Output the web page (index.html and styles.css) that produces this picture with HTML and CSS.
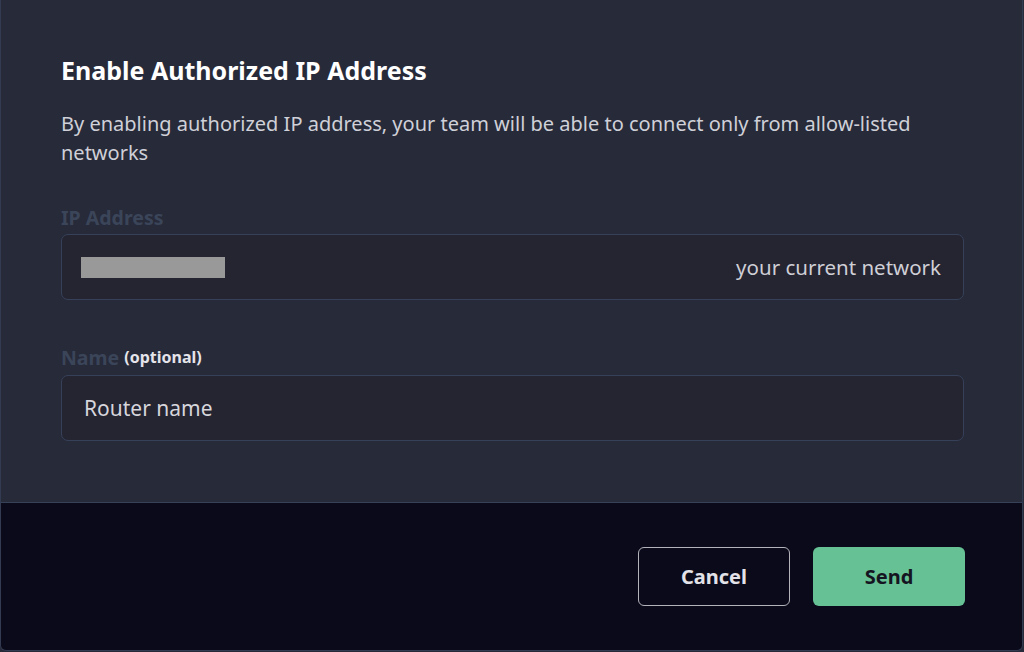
FILE: index.html
```html
<!DOCTYPE html>
<html lang="en">
<head>
<meta charset="utf-8">
<title>Enable Authorized IP Address</title>
<link rel="stylesheet" href="styles.css">
</head>
<body>
<div class="modal">
  <div class="modal-body">
    <h2 class="title">Enable Authorized IP Address</h2>
    <p class="desc">By enabling authorized IP address, your team will be able to connect only from allow-listed networks</p>
    <div class="field field-ip">
      <label class="label">IP Address</label>
      <div class="input">
        <span class="redacted"></span>
        <span class="hint">your current network</span>
      </div>
    </div>
    <div class="field field-name">
      <label class="label">Name <span class="optional">(optional)</span></label>
      <div class="input">
        <span class="placeholder">Router name</span>
      </div>
    </div>
  </div>
  <div class="modal-footer">
    <button class="btn btn-cancel">Cancel</button>
    <button class="btn btn-send">Send</button>
  </div>
</div>
</body>
</html>
```
FILE: styles.css
```css
html, body {
  margin: 0;
  padding: 0;
  background: #272a39;
}
body {
  font-family: "Noto Sans", "Open Sans", sans-serif;
  width: 1024px;
  height: 652px;
  overflow: hidden;
}
.modal {
  width: 1023px;
  height: 651px;
  border-left: 1px solid #323b52;
  border-bottom: 1px solid #323b52;
  border-right: 1px solid #323b52;
  border-bottom-left-radius: 6px;
  border-bottom-right-radius: 6px;
  box-sizing: border-box;
  display: flex;
  flex-direction: column;
  background: #272a39;
  overflow: hidden;
}
.modal-body {
  height: 503px;
  box-sizing: border-box;
  padding: 55px 58px 0 60px;
  border-bottom: 1px solid #36415a;
  display: flex;
  flex-direction: column;
}
.title {
  margin: 0;
  font-size: 25px;
  font-weight: 700;
  color: #ffffff;
  line-height: 30px;
}
.desc {
  margin: 24px 0 0 0;
  font-size: 20px;
  line-height: 29px;
  color: #cfd0d8;
  max-width: 880px;
}
.field {
  display: flex;
  flex-direction: column;
}
.field-ip { margin-top: 39px; }
.field-name { margin-top: 46px; }
.label {
  font-size: 19.5px;
  font-weight: 700;
  color: #3b4559;
  line-height: 24px;
  margin-bottom: 4px;
}
.optional {
  font-size: 16px;
  color: #e4e4ea;
  position: relative;
  top: -2px;
}
.input {
  height: 66px;
  box-sizing: border-box;
  border: 1px solid #364159;
  border-radius: 7px;
  background: #252431;
  display: flex;
  align-items: center;
  justify-content: space-between;
  padding: 0 22px 0 19px;
}
.redacted {
  display: block;
  width: 144px;
  height: 21px;
  background: #999999;
  margin-top: 1px;
}
.hint {
  font-size: 20.5px;
  color: #cfcfd6;
}
.placeholder {
  font-size: 21px;
  color: #d6d6dc;
  padding-left: 3px;
}
.modal-footer {
  flex: 1;
  background: #0b0a1a;
  display: flex;
  justify-content: flex-end;
  align-items: flex-start;
  gap: 23px;
  padding: 44px 57px 0 0;
}
.btn {
  width: 152px;
  height: 59px;
  border-radius: 6px;
  font-family: "Noto Sans", "Open Sans", sans-serif;
  font-size: 20px;
  font-weight: 700;
  cursor: pointer;
  box-sizing: border-box;
}
.btn-cancel {
  background: #0b0a1a;
  color: #e2e2e8;
  border: 1.5px solid #b4b3bb;
}
.btn-send {
  background: #66c295;
  color: #151522;
  border: none;
}
```
